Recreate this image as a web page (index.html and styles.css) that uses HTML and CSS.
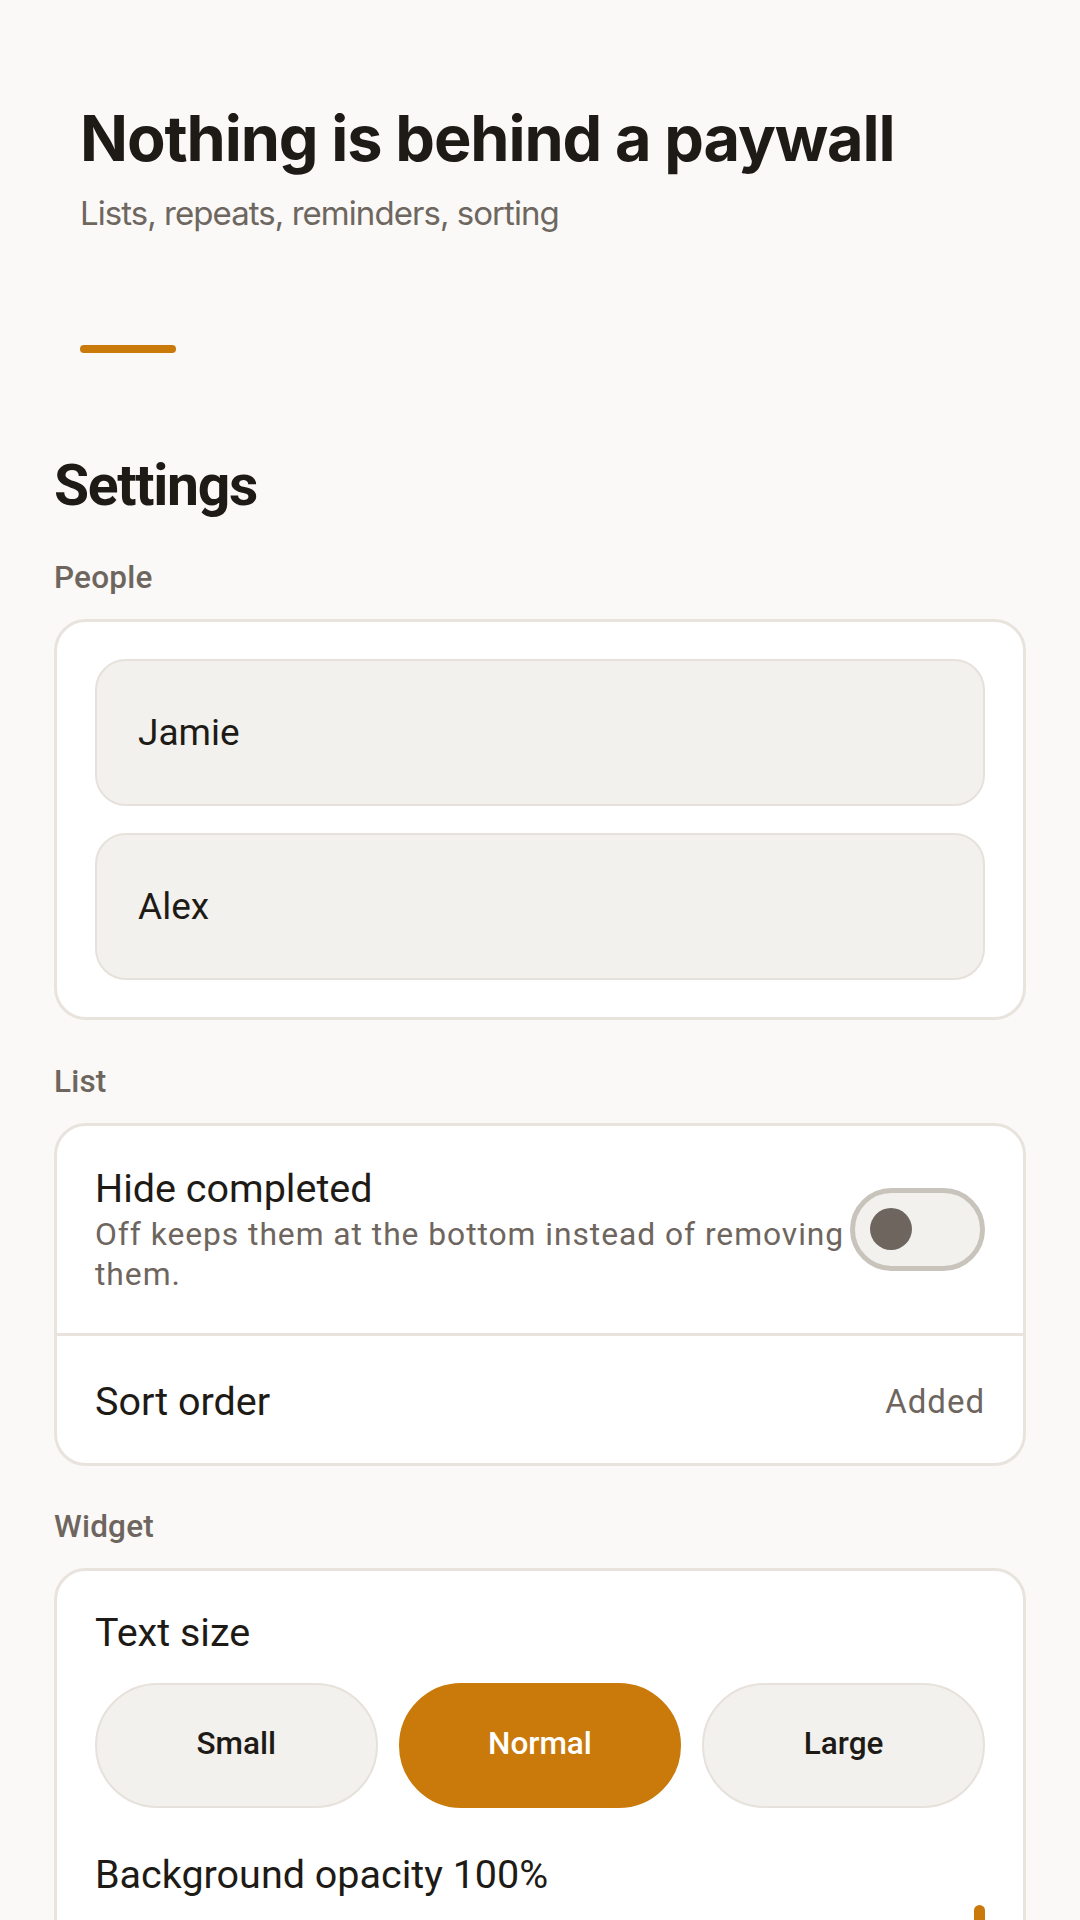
FILE: index.html
```html
<!DOCTYPE html>
<html lang="en">
<head>
<meta charset="utf-8">
<meta name="viewport" content="width=1080">
<title>Settings</title>
<link rel="stylesheet" href="styles.css">
</head>
<body>
<main class="page">
  <header class="hero">
    <h1 class="hero-title">Nothing is behind a paywall</h1>
    <p class="hero-sub">Lists, repeats, reminders, sorting</p>
    <div class="hero-accent"></div>
  </header>

  <h2 class="page-title">Settings</h2>

  <section class="section">
    <div class="section-label">People</div>
    <div class="card card-people">
      <div class="field">Jamie</div>
      <div class="field">Alex</div>
    </div>
  </section>

  <section class="section">
    <div class="section-label">List</div>
    <div class="card card-list">
      <div class="row row-toggle">
        <div class="row-text">
          <div class="row-title">Hide completed</div>
          <div class="row-desc">Off keeps them at the bottom instead of removing them.</div>
        </div>
        <div class="switch" role="switch" aria-checked="false"><span class="switch-thumb"></span></div>
      </div>
      <div class="row row-value">
        <div class="row-title">Sort order</div>
        <div class="row-meta">Added</div>
      </div>
    </div>
  </section>

  <section class="section section-widget">
    <div class="section-label">Widget</div>
    <div class="card card-widget">
      <div class="row-title">Text size</div>
      <div class="seg">
        <div class="seg-btn">Small</div>
        <div class="seg-btn seg-active">Normal</div>
        <div class="seg-btn">Large</div>
      </div>
      <div class="row-title opacity-title">Background opacity 100%</div>
      <div class="slider">
        <div class="slider-track"></div>
        <div class="slider-thumb"></div>
      </div>
    </div>
  </section>
</main>
</body>
</html>
```

FILE: styles.css
```css
html, body {
  margin: 0;
  padding: 0;
  background: #faf9f7;
}
body {
  font-family: Roboto, "Noto Sans", sans-serif;
  color: #1e1b17;
  overflow: hidden;
}
.page {
  padding: 0 54px;
}
.hero {
  padding: 100px 26px 0;
}
.hero-title {
  margin: 0;
  font-family: Inter, sans-serif;
  font-weight: 700;
  font-size: 63px;
  line-height: 76px;
  letter-spacing: -1.1px;
  color: #1e1b17;
}
.hero-sub {
  margin: 16px 0 0;
  font-family: Inter, sans-serif;
  font-weight: 400;
  font-size: 33px;
  line-height: 42px;
  letter-spacing: -0.95px;
  color: #6e6760;
}
.hero-accent {
  margin-top: 111px;
  width: 96px;
  height: 8px;
  border-radius: 4px;
  background: #c97a0a;
}
.page-title {
  margin: 99px 0 0;
  font-family: Roboto, sans-serif;
  font-weight: 700;
  font-size: 57px;
  line-height: 68px;
  letter-spacing: -1.3px;
  color: #1e1b17;
}
.section {
  margin-top: 38px;
}
.section + .section {
  margin-top: 42px;
}
.section + .section-widget {
  margin-top: 41px;
}
.section-label {
  font-weight: 500;
  font-size: 31.5px;
  line-height: 40px;
  letter-spacing: 0.2px;
  color: #6e665e;
  margin-bottom: 21px;
}
.card {
  background: #ffffff;
  border: 3px solid #e8e3dd;
  border-radius: 32px;
}
.card-people {
  padding: 37px 38px;
  display: flex;
  flex-direction: column;
  gap: 27px;
}
.field {
  box-sizing: border-box;
  height: 147px;
  display: flex;
  align-items: center;
  padding: 0 41px;
  background: #f3f1ee;
  border: 2px solid #e6e1da;
  border-radius: 31px;
  font-size: 37px;
  color: #1e1b17;
}
.card-list {
  overflow: hidden;
}
.row {
  padding: 38px 38px 39px;
  display: flex;
  align-items: center;
}
.row + .row {
  border-top: 3px solid #e8e3dd;
}
.row-value {
  padding: 41px 38px 37px;
}
.row-text {
  flex: 1;
  min-width: 0;
}
.row-title {
  font-size: 39.5px;
  line-height: 50px;
  color: #1e1b17;
}
.row-value .row-title {
  flex: 1;
  line-height: 49px;
}
.row-desc {
  font-size: 31.8px;
  line-height: 40px;
  letter-spacing: 0.95px;
  color: #6e665e;
}
.row-meta {
  font-size: 33px;
  letter-spacing: 1px;
  color: #6e665e;
}
.switch {
  box-sizing: border-box;
  flex: none;
  width: 135px;
  height: 83px;
  border: 5px solid #c8c4bc;
  border-radius: 42px;
  background: #f3f1ee;
  display: flex;
  align-items: center;
  padding-left: 15px;
}
.switch-thumb {
  width: 42px;
  height: 42px;
  border-radius: 50%;
  background: #6e665e;
}
.card-widget {
  padding: 37px 38px 38px;
}
.seg {
  margin-top: 25px;
  display: grid;
  grid-template-columns: repeat(3, 1fr);
  gap: 21px;
}
.seg-btn {
  box-sizing: border-box;
  height: 125px;
  display: flex;
  align-items: center;
  justify-content: center;
  padding-bottom: 4px;
  background: #f3f1ee;
  border: 2px solid #e6e1da;
  border-radius: 63px;
  font-weight: 500;
  font-size: 31.5px;
  color: #1e1b17;
}
.seg-active {
  background: #c97a0a;
  border-color: #c97a0a;
  color: #ffffff;
}
.opacity-title {
  margin-top: 42px;
}
.slider {
  margin-top: 5px;
  height: 115px;
  display: flex;
  align-items: center;
  gap: 8px;
}
.slider-track {
  flex: 1;
  height: 42px;
  border-radius: 21px 6px 6px 21px;
  background: #c97a0a;
}
.slider-thumb {
  width: 11px;
  height: 115px;
  border-radius: 6px;
  background: #c97a0a;
}
```
